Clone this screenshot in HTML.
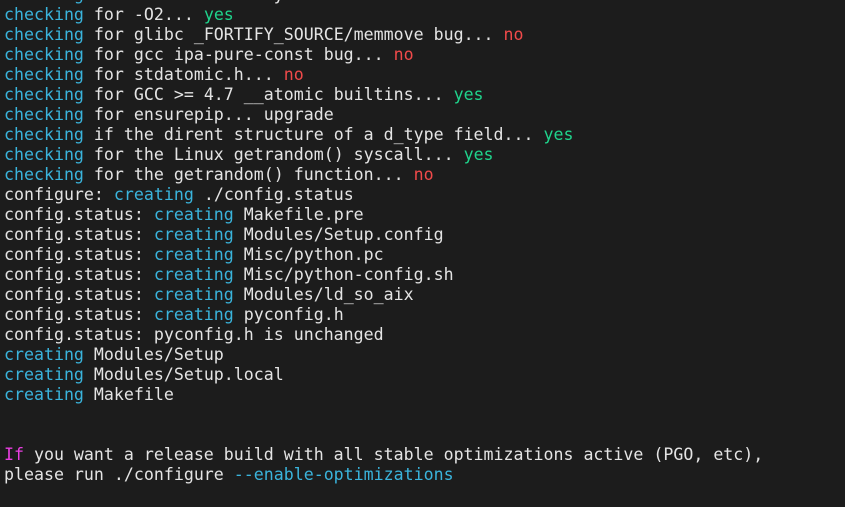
<!DOCTYPE html>
<html><head><meta charset="utf-8"><style>
html,body{margin:0;padding:0;background:#1c1c1c;width:845px;height:507px;overflow:hidden}
pre{margin:0;position:absolute;left:4px;top:-15px;font-family:"DejaVu Sans Mono","Liberation Mono",monospace;font-size:16.6px;line-height:20px;color:#e4e4e4;white-space:pre}
.c{color:#3ab4dc}.g{color:#1fd48c}.r{color:#f04a4a}.m{color:#e83ee0}
</style></head><body><pre><span class="c">checking</span> for build directory... not cached... done
<span class="c">checking</span> for -O2... <span class="g">yes</span>
<span class="c">checking</span> for glibc _FORTIFY_SOURCE/memmove bug... <span class="r">no</span>
<span class="c">checking</span> for gcc ipa-pure-const bug... <span class="r">no</span>
<span class="c">checking</span> for stdatomic.h... <span class="r">no</span>
<span class="c">checking</span> for GCC &gt;= 4.7 __atomic builtins... <span class="g">yes</span>
<span class="c">checking</span> for ensurepip... upgrade
<span class="c">checking</span> if the dirent structure of a d_type field... <span class="g">yes</span>
<span class="c">checking</span> for the Linux getrandom() syscall... <span class="g">yes</span>
<span class="c">checking</span> for the getrandom() function... <span class="r">no</span>
configure: <span class="c">creating</span> ./config.status
config.status: <span class="c">creating</span> Makefile.pre
config.status: <span class="c">creating</span> Modules/Setup.config
config.status: <span class="c">creating</span> Misc/python.pc
config.status: <span class="c">creating</span> Misc/python-config.sh
config.status: <span class="c">creating</span> Modules/ld_so_aix
config.status: <span class="c">creating</span> pyconfig.h
config.status: pyconfig.h is unchanged
<span class="c">creating</span> Modules/Setup
<span class="c">creating</span> Modules/Setup.local
<span class="c">creating</span> Makefile


<span class="m">If</span> you want a release build with all stable optimizations active (PGO, etc),
please run ./configure <span class="c">--enable-optimizations</span>
</pre></body></html>
